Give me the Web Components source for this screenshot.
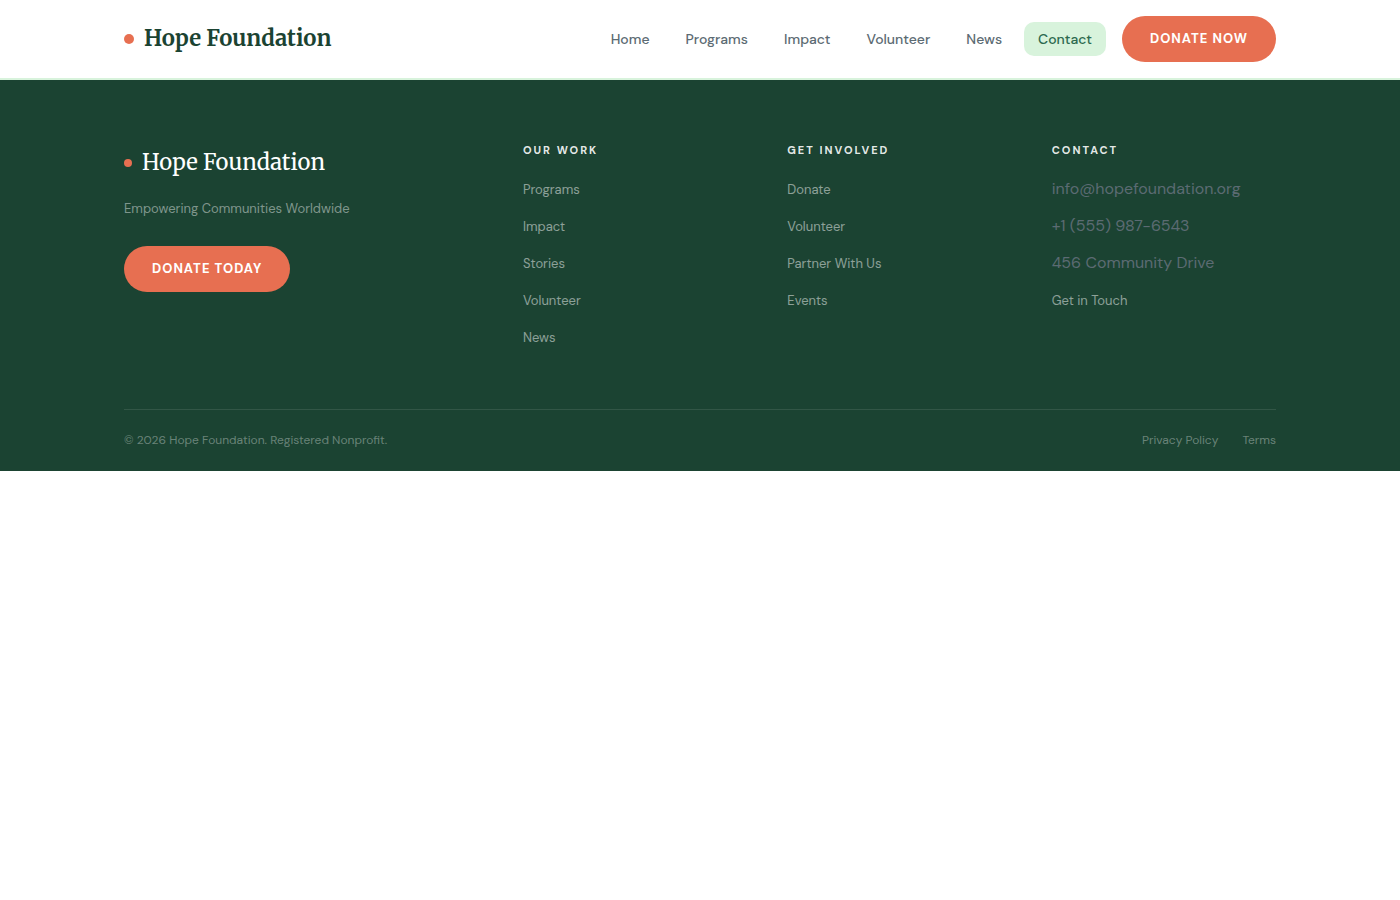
<!DOCTYPE html>
<html lang="en">
<head>
<meta charset="utf-8">
<meta name="viewport" content="width=device-width, initial-scale=1">
<title>Hope Foundation</title>
<style>
  :root {
    --forest: #1b4332;
    --green: #2d6a4f;
    --mint: #d8f3dc;
    --coral: #e76f51;
    --slate: #5c6b73;
    --serif: "Merriweather", "Liberation Serif", serif;
  }
  body {
    margin: 0;
    background: #fff;
    color: var(--slate);
    font-family: "DM Sans", "Inter", sans-serif;
    font-size: 16px;
  }
</style>
</head>
<body>
<site-header>
  <brand-mark slot="brand">Hope Foundation</brand-mark>
  <nav-link href="#home">Home</nav-link>
  <nav-link href="#programs">Programs</nav-link>
  <nav-link href="#impact">Impact</nav-link>
  <nav-link href="#volunteer">Volunteer</nav-link>
  <nav-link href="#news">News</nav-link>
  <nav-link href="#contact" current>Contact</nav-link>
  <donate-button slot="action">DONATE NOW</donate-button>
</site-header>
<site-footer>
  <brand-mark slot="brand" light>Hope Foundation</brand-mark>
  <span slot="tagline">Empowering Communities Worldwide</span>
  <donate-button slot="action">DONATE TODAY</donate-button>
  <footer-column heading="OUR WORK">
    <footer-item href="#programs">Programs</footer-item>
    <footer-item href="#impact">Impact</footer-item>
    <footer-item href="#stories">Stories</footer-item>
    <footer-item href="#volunteer">Volunteer</footer-item>
    <footer-item href="#news">News</footer-item>
  </footer-column>
  <footer-column heading="GET INVOLVED">
    <footer-item href="#donate">Donate</footer-item>
    <footer-item href="#volunteer">Volunteer</footer-item>
    <footer-item href="#partner">Partner With Us</footer-item>
    <footer-item href="#events">Events</footer-item>
  </footer-column>
  <footer-column heading="CONTACT">
    <footer-item>info@hopefoundation.org</footer-item>
    <footer-item>+1 (555) 987-6543</footer-item>
    <footer-item>456 Community Drive</footer-item>
    <footer-item href="#contact">Get in Touch</footer-item>
  </footer-column>
  <span slot="copyright">© 2026 Hope Foundation. Registered Nonprofit.</span>
  <legal-link slot="legal" href="#privacy">Privacy Policy</legal-link>
  <legal-link slot="legal" href="#terms">Terms</legal-link>
</site-footer>
<script>
  class BaseElement extends HTMLElement {
    connectedCallback() {
      if (this.shadowRoot) return;
      this.attachShadow({ mode: "open" }).innerHTML = this.render();
    }
  }

  customElements.define("brand-mark", class extends BaseElement {
    render() {
      return `<style>
        :host { display: block; }
        a { display: flex; align-items: center; gap: 10px; color: var(--forest);
            font: 700 22px/36px var(--serif); text-decoration: none; white-space: nowrap; }
        i { width: 10px; height: 10px; border-radius: 50%; background: var(--coral); }
        span { padding-bottom: 2px; }
        :host([light]) a { color: #fff; font-weight: 400; }
        :host([light]) i { width: 8px; height: 8px; }
      </style><a href="#home"><i></i><span><slot></slot></span></a>`;
    }
  });

  customElements.define("nav-link", class extends BaseElement {
    render() {
      const current = this.hasAttribute("current") ? ' aria-current="page"' : "";
      return `<style>
        :host { display: block; }
        a { display: block; padding: 6px 14px; border-radius: 10px; color: var(--slate);
            font-size: 14px; font-weight: 500; line-height: 22px; text-decoration: none; white-space: nowrap; }
        a[aria-current] { background: var(--mint); color: var(--green); }
      </style><a href="${this.getAttribute("href")}"${current}><slot></slot></a>`;
    }
  });

  customElements.define("donate-button", class extends BaseElement {
    render() {
      return `<style>
        :host { display: block; }
        button { display: block; margin: 0; padding: 12px 28px 13px; border: 0; border-radius: 23px;
            background: var(--coral); color: #fff; font-family: inherit; font-size: 13px;
            font-weight: 700; line-height: 21px; letter-spacing: 1px; white-space: nowrap; cursor: pointer; }
      </style><button type="button"><slot></slot></button>`;
    }
  });

  customElements.define("site-header", class extends BaseElement {
    render() {
      return `<style>
        :host { display: block; background: #fff; border-bottom: 2px solid var(--mint); }
        header { box-sizing: border-box; max-width: 1200px; margin: 0 auto; padding: 16px 24px;
            display: flex; align-items: center; justify-content: space-between; }
        .right { display: flex; align-items: center; gap: 16px; }
        nav { display: flex; align-items: center; gap: 8px; }
      </style><header><slot name="brand"></slot>
        <div class="right"><nav aria-label="Main"><slot></slot></nav><slot name="action"></slot></div>
      </header>`;
    }
  });

  customElements.define("footer-column", class extends BaseElement {
    render() {
      return `<style>
        :host { display: block; }
        h2 { margin: 0 0 20px; color: rgba(255, 255, 255, .9); font-size: 11px; font-weight: 700;
            line-height: 12px; letter-spacing: 2px; white-space: nowrap; }
      </style><h2>${this.getAttribute("heading")}</h2><div role="list"><slot></slot></div>`;
    }
  });

  customElements.define("footer-item", class extends BaseElement {
    render() {
      const href = this.getAttribute("href");
      this.setAttribute("role", "listitem");
      return `<style>
        :host { display: block; margin-bottom: 12px; font-size: 16px; line-height: 25px; white-space: nowrap; }
        a { color: rgba(255, 255, 255, .5); font-size: 13px; line-height: 20px; text-decoration: none; }
      </style>${href ? `<a href="${href}"><slot></slot></a>` : "<slot></slot>"}`;
    }
  });

  customElements.define("legal-link", class extends BaseElement {
    render() {
      return `<style>
        :host { display: block; }
        a { color: inherit; text-decoration: none; }
      </style><a href="${this.getAttribute("href")}"><slot></slot></a>`;
    }
  });

  customElements.define("site-footer", class extends BaseElement {
    render() {
      return `<style>
        :host { display: block; background: var(--forest); }
        footer { box-sizing: border-box; max-width: 1200px; margin: 0 auto; padding: 64px 24px 20px; }
        .grid { display: grid; grid-template-columns: 8fr 5fr 5fr 5fr; gap: 40px; margin-bottom: 48px; }
        .about { display: flex; flex-direction: column; align-items: flex-start; }
        p { margin: 14px 0 24px; color: rgba(255, 255, 255, .45); font-size: 13px; line-height: 26px; }
        .bottom { display: flex; justify-content: space-between; padding-top: 20px;
            border-top: 1px solid rgba(255, 255, 255, .1); color: rgba(255, 255, 255, .35);
            font-size: 12px; line-height: 21px; }
        .legal { display: flex; gap: 24px; }
      </style><footer>
        <div class="grid">
          <div class="about"><slot name="brand"></slot><p><slot name="tagline"></slot></p><slot name="action"></slot></div>
          <slot></slot>
        </div>
        <div class="bottom"><slot name="copyright"></slot><div class="legal"><slot name="legal"></slot></div></div>
      </footer>`;
    }
  });
</script>
</body>
</html>
